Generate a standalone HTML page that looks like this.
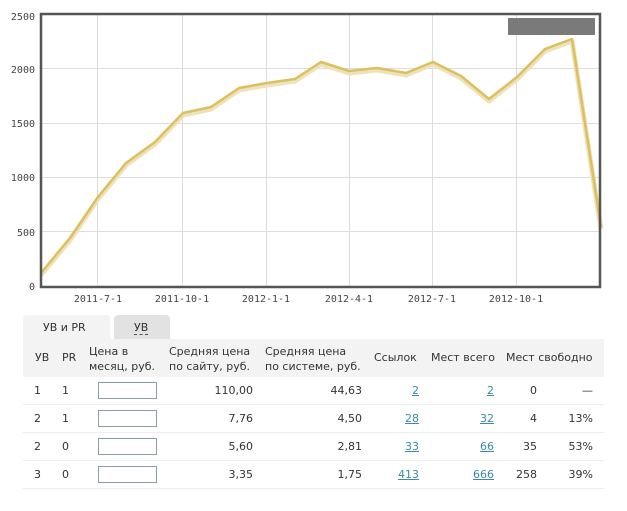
<!DOCTYPE html>
<html><head><meta charset="utf-8"><style>
body{margin:0;width:627px;height:511px;background:#fff;position:relative;font-family:"DejaVu Sans","Liberation Sans",sans-serif;overflow:hidden}
.t{position:absolute;font-size:11px;color:#333;white-space:nowrap}
.r{text-align:right}
a{color:#3a8ba6;text-decoration:underline}
.inp{position:absolute;left:98px;width:57px;height:15px;border:1px solid #8a9ea6;background:#fff}
.row{position:absolute;left:23px;width:581px;height:27px;border-bottom:1px solid #eee}
</style></head><body>
<svg width="627" height="320" style="position:absolute;left:0;top:0" font-family="DejaVu Sans Mono, Liberation Mono, monospace" font-size="10" fill="#444">
<g stroke="#ddd" stroke-width="1">
<line x1="41" y1="68.5" x2="600" y2="68.5"/><line x1="41" y1="123.5" x2="600" y2="123.5"/><line x1="41" y1="177.5" x2="600" y2="177.5"/><line x1="41" y1="231.5" x2="600" y2="231.5"/>
<line x1="97.5" y1="14" x2="97.5" y2="287"/><line x1="182.5" y1="14" x2="182.5" y2="287"/><line x1="266.5" y1="14" x2="266.5" y2="287"/><line x1="349.5" y1="14" x2="349.5" y2="287"/><line x1="432.5" y1="14" x2="432.5" y2="287"/><line x1="516.5" y1="14" x2="516.5" y2="287"/>
</g>
<rect x="508" y="18" width="87" height="17" fill="#7a7a7a"/>
<polyline fill="none" stroke="#eee2bb" stroke-width="5" stroke-linejoin="round" points="41,275 70,240 98,199 126,165 155,144 183,115 211,109 239,90 267,85 295,81 321,64 349,73 377,70 406,75 433,64 461,78 489,101 517,79 545,51 572,41 601,229"/>
<polyline fill="none" stroke="#dcbf5e" stroke-width="2.5" stroke-linejoin="round" points="41,273 70,238 98,197 126,163 155,142 183,113 211,107 239,88 267,83 295,79 321,62 349,71 377,68 406,73 433,62 461,76 489,99 517,77 545,49 572,39 601,227"/>
<rect x="41" y="14" width="559" height="273" fill="none" stroke="#555" stroke-width="2.5"/>
<g text-anchor="end">
<text x="35" y="20">2500</text><text x="35" y="73">2000</text><text x="35" y="127">1500</text><text x="35" y="181">1000</text><text x="35" y="236">500</text><text x="35" y="290">0</text>
</g>
<g text-anchor="middle">
<text x="98" y="302">2011-7-1</text><text x="182" y="302">2011-10-1</text><text x="266" y="302">2012-1-1</text><text x="349" y="302">2012-4-1</text><text x="432" y="302">2012-7-1</text><text x="516" y="302">2012-10-1</text>
</g>
</svg>
<div style="position:absolute;left:23px;top:315px;width:87px;height:25px;background:#f3f3f3;border-radius:4px 4px 0 0"></div>
<div style="position:absolute;left:114px;top:315px;width:56px;height:24px;background:#e2e2e2;border-radius:4px 4px 0 0"></div>
<div class="t" style="left:43px;top:321px">УВ и PR</div>
<div class="t" style="left:134px;top:321px;border-bottom:1px dashed #555;line-height:13px">УВ</div>
<div style="position:absolute;left:23px;top:339px;width:581px;height:38px;background:#f3f3f3"></div>
<div class="t" style="left:35px;top:351px">УВ</div>
<div class="t" style="left:62px;top:351px">PR</div>
<div class="t" style="left:89px;top:344px;line-height:15px">Цена в<br>месяц, руб.</div>
<div class="t" style="left:169px;top:344px;line-height:15px">Средняя цена<br>по сайту, руб.</div>
<div class="t" style="left:265px;top:344px;line-height:15px">Средняя цена<br>по системе, руб.</div>
<div class="t" style="left:374px;top:351px">Ссылок</div>
<div class="t" style="left:431px;top:351px">Мест всего</div>
<div class="t" style="left:506px;top:351px">Мест свободно</div>

<div class="row" style="top:377px"></div>
<div class="row" style="top:405px"></div>
<div class="row" style="top:433px"></div>
<div class="row" style="top:461px"></div>

<div class="inp" style="top:382px"></div>
<div class="inp" style="top:410px"></div>
<div class="inp" style="top:438px"></div>
<div class="inp" style="top:466px"></div>

<div style="position:absolute;left:0;top:384px">
<div class="t" style="left:34px">1</div><div class="t" style="left:62px">1</div>
<div class="t r" style="left:170px;width:83px">110,00</div><div class="t r" style="left:270px;width:92px">44,63</div>
<div class="t r" style="left:370px;width:49px"><a>2</a></div><div class="t r" style="left:440px;width:54px"><a>2</a></div>
<div class="t r" style="left:500px;width:37px">0</div><div class="t r" style="left:550px;width:43px">—</div>
</div>
<div style="position:absolute;left:0;top:412px">
<div class="t" style="left:34px">2</div><div class="t" style="left:62px">1</div>
<div class="t r" style="left:170px;width:83px">7,76</div><div class="t r" style="left:270px;width:92px">4,50</div>
<div class="t r" style="left:370px;width:49px"><a>28</a></div><div class="t r" style="left:440px;width:54px"><a>32</a></div>
<div class="t r" style="left:500px;width:37px">4</div><div class="t r" style="left:550px;width:43px">13%</div>
</div>
<div style="position:absolute;left:0;top:440px">
<div class="t" style="left:34px">2</div><div class="t" style="left:62px">0</div>
<div class="t r" style="left:170px;width:83px">5,60</div><div class="t r" style="left:270px;width:92px">2,81</div>
<div class="t r" style="left:370px;width:49px"><a>33</a></div><div class="t r" style="left:440px;width:54px"><a>66</a></div>
<div class="t r" style="left:500px;width:37px">35</div><div class="t r" style="left:550px;width:43px">53%</div>
</div>
<div style="position:absolute;left:0;top:468px">
<div class="t" style="left:34px">3</div><div class="t" style="left:62px">0</div>
<div class="t r" style="left:170px;width:83px">3,35</div><div class="t r" style="left:270px;width:92px">1,75</div>
<div class="t r" style="left:370px;width:49px"><a>413</a></div><div class="t r" style="left:440px;width:54px"><a>666</a></div>
<div class="t r" style="left:500px;width:37px">258</div><div class="t r" style="left:550px;width:43px">39%</div>
</div>
</body></html>
